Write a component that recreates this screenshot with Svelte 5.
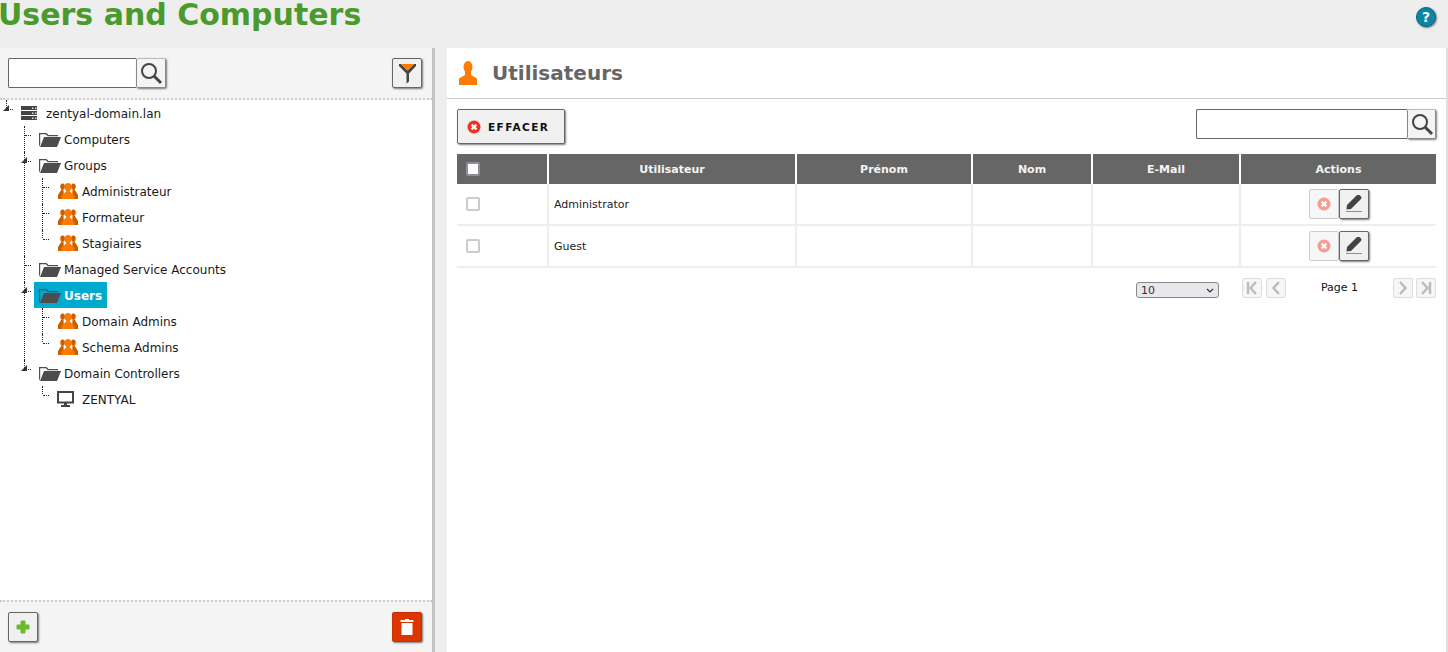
<script lang="ts">
  interface TreeNode {
    label: string;
    icon: 'server' | 'folder' | 'group' | 'computer';
    selected?: boolean;
    children?: TreeNode[];
  }

  const tree: TreeNode[] = [
    {
      label: 'zentyal-domain.lan',
      icon: 'server',
      children: [
        { label: 'Computers', icon: 'folder' },
        {
          label: 'Groups',
          icon: 'folder',
          children: [
            { label: 'Administrateur', icon: 'group' },
            { label: 'Formateur', icon: 'group' },
            { label: 'Stagiaires', icon: 'group' },
          ],
        },
        { label: 'Managed Service Accounts', icon: 'folder' },
        {
          label: 'Users',
          icon: 'folder',
          selected: true,
          children: [
            { label: 'Domain Admins', icon: 'group' },
            { label: 'Schema Admins', icon: 'group' },
          ],
        },
        {
          label: 'Domain Controllers',
          icon: 'folder',
          children: [{ label: 'ZENTYAL', icon: 'computer' }],
        },
      ],
    },
  ];

  const users = ['Administrator', 'Guest'];
  const columns = ['Utilisateur', 'Prénom', 'Nom', 'E-Mail', 'Actions'];
</script>

{#snippet searchIcon()}
  <svg width="24" height="24" viewBox="0 0 24 24" fill="none" stroke="#444">
    <circle cx="10" cy="10" r="7" stroke-width="2" />
    <path d="M15 15 L22 22" stroke-width="3" />
  </svg>
{/snippet}

{#snippet closeIcon()}
  <svg width="14" height="14" viewBox="0 0 14 14">
    <circle cx="7" cy="7" r="6.5" fill="#f2301e" />
    <path d="M4.6 4.6 L9.4 9.4 M9.4 4.6 L4.6 9.4" stroke="#fff" stroke-width="2.2" />
  </svg>
{/snippet}

{#snippet nodeIcon(kind: TreeNode['icon'])}
  {#if kind === 'server'}
    <svg class="ico-server" width="18" height="16" viewBox="0 0 18 16" fill="#444">
      <path d="M1 1h16v4H1z M1 6h16v4H1z M1 11h16v4H1z" />
      <path d="M12 2.5h1.5V4H12z M15 2.5h1.5V4H15z M12 7.5h1.5V9H12z M15 7.5h1.5V9H15z M12 12.5h1.5V14H12z M15 12.5h1.5V14H15z" fill="#ddd" />
    </svg>
  {:else if kind === 'folder'}
    <svg class="ico-folder" width="22" height="15" viewBox="0 0 22 15" fill="#4d4d4d">
      <path d="M0 1h7.5l2 2H19v1.2H8.8l-2-2H1.2V12L0 15z" />
      <path d="M5 5h17l-4 10H1z" />
    </svg>
  {:else if kind === 'group'}
    <svg class="ico-group" width="20" height="16" viewBox="0 0 20 16">
      <g fill="#c95f00">
        <ellipse cx="4.600" cy="3.600" rx="2.300" ry="3.200" />
        <ellipse cx="15.400" cy="3.600" rx="2.300" ry="3.200" />
        <path d="M0 16v-4l3.500-5.500h2L6 16z M14 16l.5-9.500h2L20 12v4z" />
      </g>
      <ellipse cx="10" cy="4" rx="3.400" ry="4" fill="#ff7a00" />
      <path d="M3.500 16v-3l4.800-4.800V6h3.400v2.200l4.800 4.800v3z" fill="#ff7a00" />
    </svg>
  {:else}
    <svg class="ico-computer" width="18" height="16" viewBox="0 0 18 16">
      <rect x="1" y="1" width="15" height="10.500" fill="#fff" stroke="#444" stroke-width="2" />
      <path d="M7 12h3v2H7z M4 14h9v2H4z" fill="#444" />
    </svg>
  {/if}
{/snippet}

{#snippet branch(nodes: TreeNode[], depth: number)}
  <ul class:nested={depth > 0}>
    {#each nodes as node}
      <li class:open={node.children} class:top={depth === 0}>
        <div class="row">
          <span class="node" class:selected={node.selected}>
            {@render nodeIcon(node.icon)}
            <span class="label">{node.label}</span>
          </span>
        </div>
        {#if node.children}
          {@render branch(node.children, depth + 1)}
        {/if}
      </li>
    {/each}
  </ul>
{/snippet}

<div class="page">
  <header class="top-title">
    <h1>Users and Computers</h1>
    <span class="help">?</span>
  </header>

  <main>
    <aside class="side">
      <div class="side-bar">
        <div class="search">
          <input type="text" aria-label="Search tree" />
          <button class="btn" aria-label="Search">{@render searchIcon()}</button>
        </div>
        <button class="btn square" aria-label="Filter">
          <svg width="17" height="21" viewBox="0 0 17 21">
            <path d="M0 1H2L8.500 7.500 15 1H17V3L10 10.500V18.500L7.500 20.500V10.500L0 3z" fill="#444" />
            <path d="M2 1H15L8.500 7.500z" fill="#ff7a00" />
          </svg>
        </button>
      </div>
      <div class="tree">
        {@render branch(tree, 0)}
      </div>
      <div class="side-foot">
        <button class="btn square" aria-label="Add">
          <svg width="14" height="14" viewBox="0 0 14 14">
            <path d="M4.500 1.500Q4.500 0.500 5.500 0.500h3q1 0 1 1V4.500h3q1 0 1 1v3q0 1-1 1h-3v3q0 1-1 1h-3q-1 0-1-1v-3h-3q-1 0-1-1v-3q0-1 1-1h3z" fill="#6cba2c" />
          </svg>
        </button>
        <button class="btn square danger" aria-label="Delete">
          <svg width="14" height="16" viewBox="0 0 14 16" fill="#fff">
            <path d="M5 0h4v1h4.500v2H.5V1H5z M1.500 4h11v12h-11z" />
          </svg>
        </button>
      </div>
    </aside>

    <section class="content">
      <div class="content-head">
        <svg width="20" height="24" viewBox="0 0 20 24" fill="#ff7a00">
          <ellipse cx="10" cy="6" rx="4.500" ry="6" />
          <path d="M7 11h6v3l6 3.500V24H1v-6.500L7 14z" />
        </svg>
        <h2>Utilisateurs</h2>
      </div>

      <div class="content-body">
        <div class="toolbar">
          <button class="btn clear">
            {@render closeIcon()}
            <span>EFFACER</span>
          </button>
          <div class="search wide">
            <input type="text" aria-label="Search users" />
            <button class="btn" aria-label="Search">{@render searchIcon()}</button>
          </div>
        </div>

        <table>
          <colgroup>
            <col style="width: 92px" />
            <col style="width: 248px" />
            <col style="width: 176px" />
            <col style="width: 120px" />
            <col style="width: 148px" />
            <col />
          </colgroup>
          <thead>
            <tr>
              <th class="check"><input type="checkbox" aria-label="Select all" /></th>
              {#each columns as column}
                <th>{column}</th>
              {/each}
            </tr>
          </thead>
          <tbody>
            {#each users as user}
              <tr>
                <td class="check"><input type="checkbox" aria-label={`Select ${user}`} /></td>
                <td>{user}</td>
                <td></td>
                <td></td>
                <td></td>
                <td class="actions">
                  <div>
                    <button class="btn square off" aria-label="Delete">
                      {@render closeIcon()}
                    </button>
                    <button class="btn square" aria-label="Edit">
                      <svg width="18" height="18" viewBox="0 0 18 18">
                        <path d="M2 12 L11.500 2.500 Q13 1 14.500 2 L16 3.500 Q17 5 15.500 6.500 L6 16 L1.500 16.500z" fill="#444" transform="translate(0 -2)" />
                        <path d="M1 16.500h16" stroke="#e8761a" stroke-width="1" />
                      </svg>
                    </button>
                  </div>
                </td>
              </tr>
            {/each}
          </tbody>
        </table>

        <div class="pager">
          <div class="select-wrap">
            <select aria-label="Rows per page">
              <option>10</option>
            </select>
            <svg width="8" height="5" viewBox="0 0 8 5" fill="none" stroke="#333" stroke-width="1.200"><path d="M1 1 L4 4 L7 1" /></svg>
          </div>
          <div class="pager-group first">
            <button class="page-btn" aria-label="First page">
              <svg width="12" height="14" viewBox="0 0 12 14" fill="none" stroke="#bbb" stroke-width="2.400"><path d="M2 1v12 M10 1 L4.500 7 L10 13" /></svg>
            </button>
            <button class="page-btn" aria-label="Previous page">
              <svg width="12" height="14" viewBox="0 0 12 14" fill="none" stroke="#bbb" stroke-width="2.400"><path d="M9 1 L3.500 7 L9 13" /></svg>
            </button>
          </div>
          <span class="page-label">Page 1</span>
          <div class="pager-group">
            <button class="page-btn" aria-label="Next page">
              <svg width="12" height="14" viewBox="0 0 12 14" fill="none" stroke="#bbb" stroke-width="2.400"><path d="M3 1 L8.500 7 L3 13" /></svg>
            </button>
            <button class="page-btn" aria-label="Last page">
              <svg width="12" height="14" viewBox="0 0 12 14" fill="none" stroke="#bbb" stroke-width="2.400"><path d="M10 1v12 M2 1 L7.500 7 L2 13" /></svg>
            </button>
          </div>
        </div>
      </div>
    </section>
  </main>
</div>

<style>
  :global(body) {
    margin: 0;
    background: #eee;
    font-family: "DejaVu Sans", sans-serif;
    overflow: hidden;
  }

  .page {
    height: 652px;
    display: flex;
    flex-direction: column;
    overflow: hidden;
  }

  .top-title {
    height: 48px;
    flex: none;
    display: flex;
    justify-content: space-between;
    padding-right: 12px;
  }

  h1 {
    margin: 0 0 0 -2px;
    font-size: 30px;
    line-height: 30px;
    color: #4a9a2c;
    font-weight: 700;
  }

  .help {
    width: 20px;
    height: 20px;
    margin-top: 7px;
    border-radius: 50%;
    background: #0a85a5;
    border: 1px solid #06667f;
    box-sizing: border-box;
    box-shadow: 1px 1px 2px rgba(0, 0, 0, 0.5);
    color: #fff;
    font-size: 14px;
    font-weight: 700;
    line-height: 18px;
    text-align: center;
  }

  main {
    flex: 1;
    display: flex;
    gap: 12px;
    min-height: 0;
  }

  .side {
    width: 432px;
    flex: none;
    display: flex;
    flex-direction: column;
    background: #fff;
    border-right: 3px solid #c4c4c4;
  }

  .side-bar,
  .side-foot {
    flex: none;
    display: flex;
    justify-content: space-between;
    padding: 10px 10px 10px 8px;
    background: #f4f4f4;
  }

  .side-bar {
    border-bottom: 2px dotted #ccc;
  }

  .side-foot {
    border-top: 2px dotted #ccc;
  }

  .tree {
    flex: 1;
    font-size: 12px;
    color: #1a1a1a;
  }

  ul {
    list-style: none;
    margin: 0;
    padding: 0;
  }

  li {
    position: relative;
  }

  .nested {
    padding-left: 18px;
  }

  /* vertical guide, stops at the tick of the last sibling */
  li::after {
    content: "";
    position: absolute;
    left: 6px;
    top: 0;
    bottom: 0;
    border-left: 1px dotted #222;
  }

  li:last-child::after {
    bottom: auto;
    height: 8px;
  }

  /* little horizontal tick towards each row */
  li::before {
    content: "";
    position: absolute;
    left: 7px;
    top: 9px;
    width: 6px;
    border-top: 1px dotted #222;
  }

  .row {
    height: 26px;
    display: flex;
    align-items: center;
    padding-left: 16px;
  }

  .top > .row {
    padding-left: 20px;
  }

  .node {
    display: inline-flex;
    align-items: center;
    height: 26px;
    gap: 3px;
  }

  .label {
    padding-top: 2px;
  }

  .selected {
    background: #00a9ce;
    color: #fff;
    font-weight: 700;
    padding-right: 5px;
  }

  .ico-server {
    margin-right: 5px;
  }

  .ico-computer {
    margin-left: 5px;
    margin-right: 4px;
  }

  .ico-group {
    margin-left: 6px;
    margin-right: 1px;
  }

  .ico-folder {
    margin-left: 5px;
  }

  /* expander triangle */
  li.open > .row::before {
    content: "";
    position: absolute;
    left: 3px;
    top: 5px;
    z-index: 1;
    border-style: solid;
    border-width: 0 0 6px 6px;
    border-color: transparent transparent #333 transparent;
  }

  .search {
    display: flex;
    height: 30px;
  }

  .search input {
    width: 128px;
    box-sizing: border-box;
    height: 30px;
    border: 1px solid #666;
    border-right: 0;
    border-radius: 2px 0 0 2px;
    background: #fff;
    padding: 0 4px;
    outline: none;
  }

  .search.wide input {
    width: 211px;
  }

  .search.wide .btn {
    width: 29px;
  }

  .btn {
    width: 30px;
    height: 30px;
    box-sizing: border-box;
    padding: 0;
    display: inline-flex;
    align-items: center;
    justify-content: center;
    background: #f0f0f0;
    border: 1px solid #666;
    border-radius: 2px;
    box-shadow: 1px 1px 2px rgba(0, 0, 0, 0.5);
    font-family: inherit;
  }

  .search .btn {
    border-color: #bbb #888 #888 #888;
    background: #f4f4f4;
  }

  .danger {
    background: #dc3500;
    border-color: #c83000;
  }

  .off {
    background: #f7f7f7;
    border-color: #ccc;
    box-shadow: none;
  }

  .off svg {
    opacity: 0.45;
  }

  .content {
    flex: 1;
    background: #fff;
    border-right: 2px solid #e0e0e0;
    display: flex;
    flex-direction: column;
    min-width: 0;
  }

  .content-head {
    height: 51px;
    flex: none;
    box-sizing: border-box;
    border-bottom: 1px solid #ccc;
    display: flex;
    align-items: center;
    gap: 14px;
    padding-left: 11px;
  }

  h2 {
    margin: 0;
    font-size: 20px;
    font-weight: 700;
    color: #666;
  }

  .content-body {
    padding: 10px 10px 0;
  }

  .toolbar {
    display: flex;
    justify-content: space-between;
    align-items: flex-start;
    height: 45px;
  }

  .clear {
    width: 108px;
    height: 35px;
    gap: 7px;
    justify-content: flex-start;
    padding-left: 9px;
  }

  .clear span {
    font-size: 10.500px;
    font-weight: 700;
    letter-spacing: 1.400px;
    color: #111;
  }

  table {
    width: 100%;
    table-layout: fixed;
    border-collapse: separate;
    border-spacing: 0;
    font-size: 11px;
    color: #222;
  }

  th {
    height: 30px;
    padding: 0;
    background: #666;
    color: #f4f4f4;
    font-weight: 700;
    border-right: 2px solid #fff;
  }

  th:last-child,
  td:last-child {
    border-right: 0;
  }

  td {
    height: 40px;
    padding: 0 6px 0 5px;
    border-right: 2px solid #eee;
    border-bottom: 2px solid #eee;
  }

  .check {
    text-align: left;
    padding: 0 0 0 9px;
  }

  input[type="checkbox"] {
    appearance: none;
    display: block;
    width: 14px;
    height: 14px;
    margin: 0;
    background: #fff;
    border: 2px solid #ccc;
    border-radius: 2px;
    box-sizing: border-box;
  }

  th input[type="checkbox"] {
    border-color: #8e8e9e;
  }

  td.actions {
    padding: 0 5px;
  }

  .actions div {
    display: flex;
    justify-content: center;
  }

  .pager {
    display: flex;
    align-items: flex-start;
    height: 24px;
    margin-top: 10px;
    font-size: 11px;
    color: #111;
    padding-left: 679px;
  }

  .select-wrap {
    position: relative;
    width: 83px;
    height: 16px;
    margin-top: 4px;
  }

  .select-wrap svg {
    position: absolute;
    right: 5px;
    top: 6px;
    pointer-events: none;
  }

  select {
    appearance: none;
    display: block;
    width: 83px;
    height: 16px;
    box-sizing: border-box;
    padding: 0 0 0 4px;
    font-size: 11px;
    font-family: inherit;
    background: #e8e8ec;
    border: 1px solid #888;
    border-radius: 3px;
    color: #333;
  }

  .pager-group {
    display: flex;
    gap: 3px;
  }

  .pager-group.first {
    margin-left: 23px;
    gap: 4px;
  }

  .page-btn {
    width: 20px;
    height: 20px;
    padding: 0;
    display: inline-flex;
    align-items: center;
    justify-content: center;
    background: #f6f6f6;
    border: 1px solid #ddd;
    border-radius: 2px;
  }

  .page-label {
    width: 107px;
    text-align: center;
    line-height: 20px;
  }
</style>
